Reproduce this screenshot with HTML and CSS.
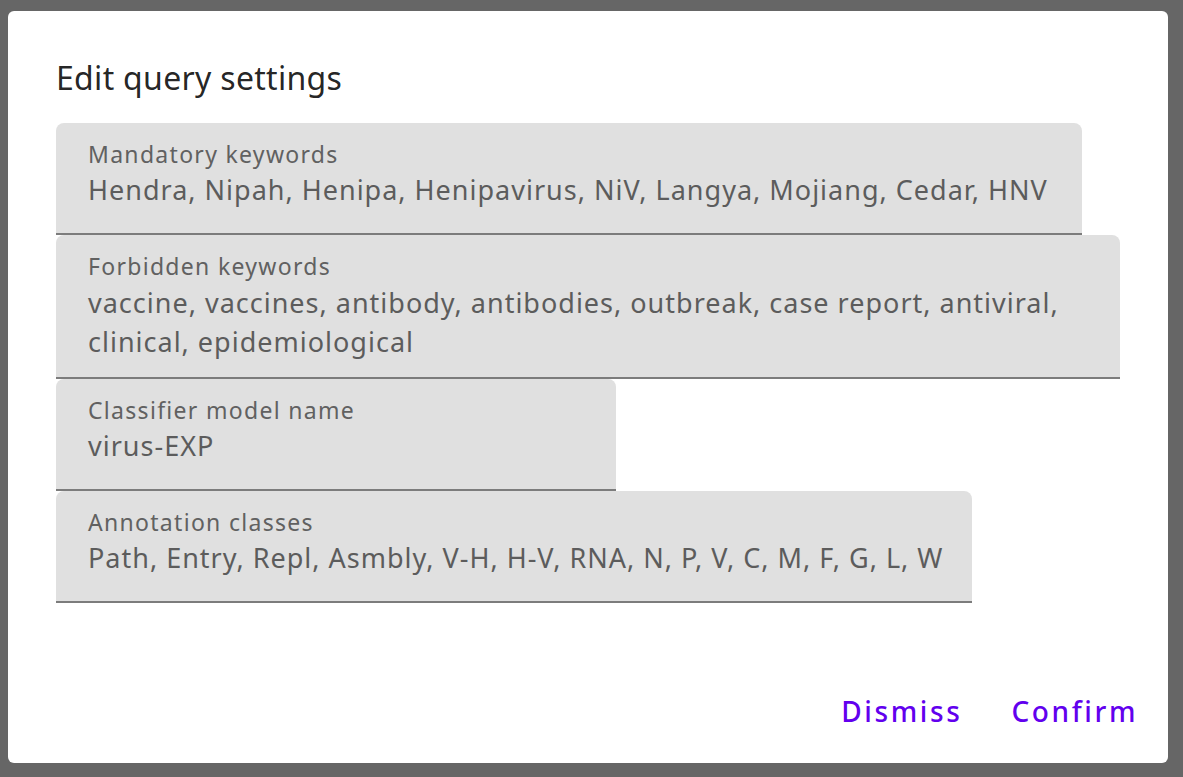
FILE: index.html
```html
<!DOCTYPE html>
<html lang="en">
<head>
<meta charset="utf-8">
<title>Edit query settings</title>
<link rel="stylesheet" href="styles.css">
</head>
<body>
<div class="overlay">
  <div class="dialog">
    <h2 class="dialog-title">Edit query settings</h2>
    <div class="dialog-content">
      <div class="field field-w1">
        <div class="field-label">Mandatory keywords</div>
        <div class="field-value">Hendra, Nipah, Henipa, Henipavirus, NiV, Langya, Mojiang, Cedar, HNV</div>
      </div>
      <div class="field field-w2 field-multi">
        <div class="field-label">Forbidden keywords</div>
        <div class="field-value">vaccine, vaccines, antibody, antibodies, outbreak, case report, antiviral, clinical, epidemiological</div>
      </div>
      <div class="field field-w3">
        <div class="field-label">Classifier model name</div>
        <div class="field-value">virus-EXP</div>
      </div>
      <div class="field field-w4">
        <div class="field-label">Annotation classes</div>
        <div class="field-value">Path, Entry, Repl, Asmbly, V-H, H-V, RNA, N, P, V, C, M, F, G, L, W</div>
      </div>
    </div>
    <div class="dialog-actions">
      <button class="btn">Dismiss</button>
      <button class="btn">Confirm</button>
    </div>
  </div>
</div>
</body>
</html>
```

FILE: styles.css
```css
* { box-sizing: border-box; }
html, body {
  margin: 0;
  padding: 0;
  width: 1183px;
  height: 777px;
  overflow: hidden;
  font-family: "Noto Sans", "Open Sans", sans-serif;
}
.overlay {
  width: 1183px;
  height: 777px;
  background: #666666;
  padding: 11px 15px 14px 8px;
}
.dialog {
  width: 1160px;
  height: 752px;
  background: #ffffff;
  border-radius: 6px;
  display: flex;
  flex-direction: column;
}
.dialog-title {
  margin: 0;
  padding: 47px 48px 0 48px;
  font-size: 32px;
  line-height: 40px;
  font-weight: 400;
  color: rgba(0, 0, 0, 0.87);
  letter-spacing: 0.3px;
}
.dialog-content {
  padding: 25px 48px 0 48px;
  display: flex;
  flex-direction: column;
  align-items: flex-start;
  flex: 1;
}
.field {
  background: #e0e0e0;
  border-top-left-radius: 8px;
  border-top-right-radius: 8px;
  border-bottom: 2px solid #7c7c7c;
  padding: 15px 20px 24px 32px;
  color: #5f5f5f;
}
.field-w1 { width: 1026px; }
.field-w2 { width: 1064px; }
.field-w3 { width: 560px; }
.field-w4 { width: 916px; }
.field-multi { padding-bottom: 16px; }
.field-multi .field-value { margin-top: 1px; }
.field-label {
  font-size: 23px;
  line-height: 32px;
  letter-spacing: 1.3px;
  color: #616161;
}
.field-value {
  font-size: 27px;
  line-height: 39px;
  letter-spacing: 1px;
  color: #5c5c5c;
}
.dialog-actions {
  display: flex;
  justify-content: flex-end;
  gap: 17px;
  padding: 0 14px 16px 0;
}
.btn {
  border: none;
  background: transparent;
  font-family: "Noto Sans", "Open Sans", sans-serif;
  font-size: 28px;
  font-weight: 500;
  letter-spacing: 2.6px;
  color: #6200ee;
  padding: 0 16px;
  height: 72px;
  line-height: 72px;
  cursor: pointer;
}
```
